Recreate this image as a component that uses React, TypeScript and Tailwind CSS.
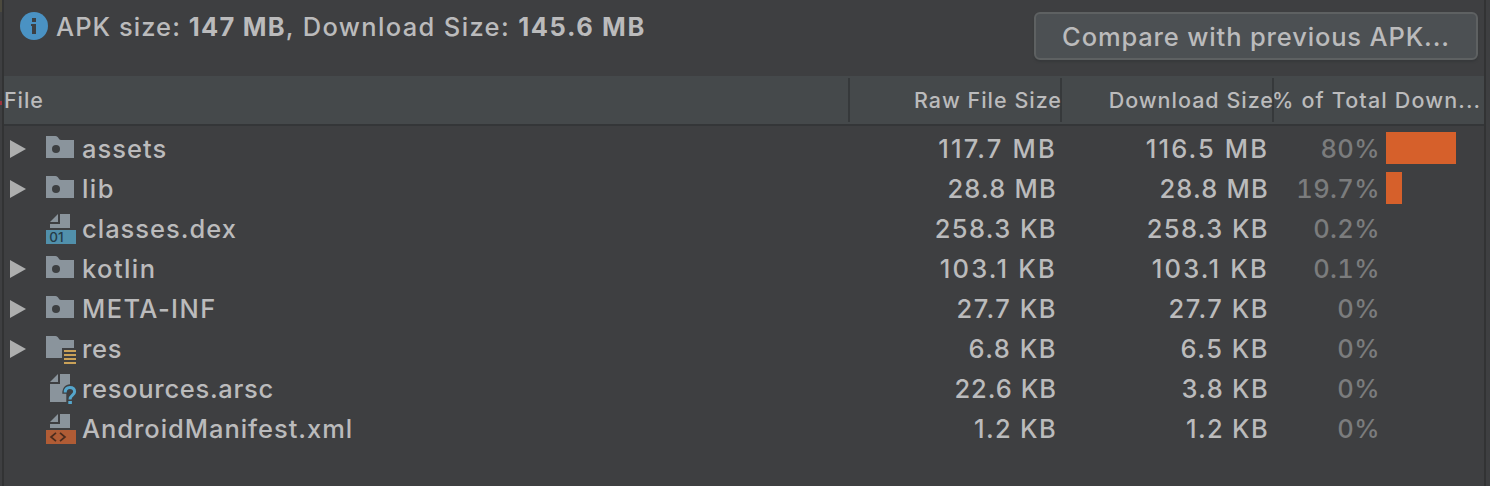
import type { ReactNode } from "react";

type IconKind = "folder" | "res" | "dex" | "arsc" | "xml";

interface Entry {
  name: string;
  icon: IconKind;
  raw: string;
  download: string;
  percent: string;
  bar?: number;
  tracking: string;
  rawTracking: string;
  downloadTracking: string;
}

const entries: Entry[] = [
  { name: "assets", icon: "folder", raw: "117.7 MB", download: "116.5 MB", percent: "80%", bar: 70, tracking: "tracking-[1px]", rawTracking: "tracking-[2.2px]", downloadTracking: "tracking-[2.1px]" },
  { name: "lib", icon: "folder", raw: "28.8 MB", download: "28.8 MB", percent: "19.7%", bar: 16, tracking: "tracking-[1.4px]", rawTracking: "tracking-[1.2px]", downloadTracking: "tracking-[1.2px]" },
  { name: "classes.dex", icon: "dex", raw: "258.3 KB", download: "258.3 KB", percent: "0.2%", tracking: "tracking-[1px]", rawTracking: "tracking-[1.4px]", downloadTracking: "tracking-[1.4px]" },
  { name: "kotlin", icon: "folder", raw: "103.1 KB", download: "103.1 KB", percent: "0.1%", tracking: "tracking-[1.4px]", rawTracking: "tracking-[2.2px]", downloadTracking: "tracking-[2.2px]" },
  { name: "META-INF", icon: "folder", raw: "27.7 KB", download: "27.7 KB", percent: "0%", tracking: "tracking-[1.4px]", rawTracking: "tracking-[1.5px]", downloadTracking: "tracking-[1.5px]" },
  { name: "res", icon: "res", raw: "6.8 KB", download: "6.5 KB", percent: "0%", tracking: "tracking-[0.7px]", rawTracking: "tracking-[1.5px]", downloadTracking: "tracking-[1.5px]" },
  { name: "resources.arsc", icon: "arsc", raw: "22.6 KB", download: "3.8 KB", percent: "0%", tracking: "tracking-[0.7px]", rawTracking: "tracking-[1px]", downloadTracking: "tracking-[1.3px]" },
  { name: "AndroidManifest.xml", icon: "xml", raw: "1.2 KB", download: "1.2 KB", percent: "0%", tracking: "tracking-[0.95px]", rawTracking: "tracking-[1.3px]", downloadTracking: "tracking-[1.3px]" },
];

function FileIcon({ kind }: { kind: IconKind }) {
  let art: ReactNode;
  if (kind === "folder") {
    art = (
      <>
        <path d="M0 4H9.5C12.5 4 12.5 8 15 8H28V26H0Z" fill="#8a949c" />
        <circle cx="10" cy="17" r="4" fill="#3c3f41" />
      </>
    );
  } else if (kind === "res") {
    art = (
      <>
        <path d="M0 4H9.5C12.5 4 12.5 8 15 8H28V16H16V26H0Z" fill="#8a949c" />
        <path d="M18 18h12v2H18zM18 22h12v2H18zM18 26h12v2H18zM18 30h12v2H18z" fill="#c9a158" />
      </>
    );
  } else if (kind === "arsc") {
    art = (
      <>
        <path d="M4 10L12 2V10ZM14 2H24V12.2C19.5 12.4 16.3 15.4 16.3 21.8H20.3V30H4V12H14Z" fill="#8a949c" />
        <path d="M19.2 20.6C19.2 17.2 21 15.6 23.8 15.6C26.7 15.6 28.6 17.2 28.6 19.7C28.6 23.2 24 23 24 27.4" fill="none" stroke="#55a6cc" strokeWidth="3" />
        <path d="M22.3 29h3.6v3h-3.6z" fill="#55a6cc" />
      </>
    );
  } else {
    const dex = kind === "dex";
    art = (
      <>
        <path d="M4 10L12 2V10ZM14 2H24V16H4V12H14Z" fill="#8a949c" />
        <rect y="18" width="30" height="14" fill={dex ? "#5190ab" : "#b05c35"} />
        {dex ? (
          <text x="3.2" y="30" fontSize="13.5" fontWeight="500" letterSpacing="0" fill="#253c48" className="font-['Inter',sans-serif]">
            01
          </text>
        ) : (
          <path d="M10 20.8L5 25L10 29.2M14 20.8L19 25L14 29.2" fill="none" stroke="#4a2c1e" strokeWidth="1.7" />
        )}
      </>
    );
  }
  return (
    <svg width="32" height="32" viewBox="0 0 32 32" className="shrink-0">
      {art}
    </svg>
  );
}

function HeaderCell({ children, width }: { children: ReactNode; width: string }) {
  return (
    <div className={`flex items-center justify-end whitespace-nowrap border-r-2 border-[#36393b] ${width}`}>
      <span className="-mr-[2px] tracking-[1px]">{children}</span>
    </div>
  );
}

function SizeCell({ value, tracking }: { value: string; tracking: string }) {
  return (
    <div className={`w-[212px] whitespace-nowrap pr-[5px] pt-0.5 text-right ${tracking}`}>{value}</div>
  );
}

export default function App() {
  return (
    <div className="flex h-[486px] w-[1490px] overflow-hidden bg-[#3e3f41] font-['Inter',sans-serif] text-[25.5px] font-[450] text-[#bbbbbc]">
      <div className="flex w-1 shrink-0 flex-col border-r-2 border-[#323334]">
        <div className="h-3 bg-[#4c4a3e]" />
        <div className="mt-[89px] h-1 bg-[#9c3440]" />
      </div>
      <main className="w-[1480px] shrink-0">
        <div className="flex h-[76px] items-start justify-between pl-4 pr-1.5">
          <div className="flex items-center pt-[11px]">
            <svg width="28" height="28" viewBox="0 0 28 28" className="-mt-px shrink-0">
              <circle cx="14" cy="14" r="14" fill="#4a92c3" />
              <path d="M12 6h4v4h-4zM11 12h5v10h-4v-8h-1z" fill="#3c4043" />
            </svg>
            <p className="ml-2 whitespace-pre pt-px leading-[30px] tracking-[1.35px]">
              <span className="tracking-[1.05px]">APK size: </span>
              <b className="font-bold tracking-[1.2px]">147 MB</b>, Download Size: <b className="font-bold tracking-[1.6px]">145.6 MB</b>
            </p>
          </div>
          <button className="mt-3 h-12 w-[444px] whitespace-nowrap rounded-md border-2 border-[#5e6162] bg-[#4c5053] text-center leading-[46px] tracking-[0.85px] shadow-[0_2px_2px_#37393b]">
            Compare with previous APK...
          </button>
        </div>
        <div className="flex h-[50px] border-b-2 border-[#343638] bg-[#45494b] py-0.5 text-[21.5px]">
          <div className="flex w-[846px] items-center border-r-2 border-[#36393b] tracking-[0.9px]">File</div>
          <HeaderCell width="w-[212px]">Raw File Size</HeaderCell>
          <HeaderCell width="w-[212px]">Download Size</HeaderCell>
          <div className="-ml-[2px] flex flex-1 items-center whitespace-nowrap tracking-[1.15px]">% of Total Down...</div>
        </div>
        <div className="pt-0.5">
          {entries.map((e) => (
            <div key={e.name} className="flex h-10 items-center">
              <div className="flex w-[846px] items-center pl-1.5">
                <svg width="16" height="20" viewBox="0 0 16 20" className="mr-5 shrink-0">
                  {["folder", "res"].includes(e.icon) && <path d="M0 2L16 11L0 20Z" fill="#adaeae" />}
                </svg>
                <FileIcon kind={e.icon} />
                <span className={`ml-1 whitespace-nowrap pt-0.5 ${e.tracking}`}>{e.name}</span>
              </div>
              <SizeCell value={e.raw} tracking={e.rawTracking} />
              <SizeCell value={e.download} tracking={e.downloadTracking} />
              <div className="w-[105px] whitespace-nowrap pt-0.5 text-right tabular-nums tracking-[0.4px] text-[#7b7c7d]">
                <span className="-mr-px">{e.percent}</span>
              </div>
              {e.bar && <div className="ml-[7px] h-8 bg-[#d6602b]" style={{ width: e.bar }} />}
            </div>
          ))}
        </div>
      </main>
      <div className="w-1.5 shrink-0 border-l-2 border-[#323334]" />
    </div>
  );
}
